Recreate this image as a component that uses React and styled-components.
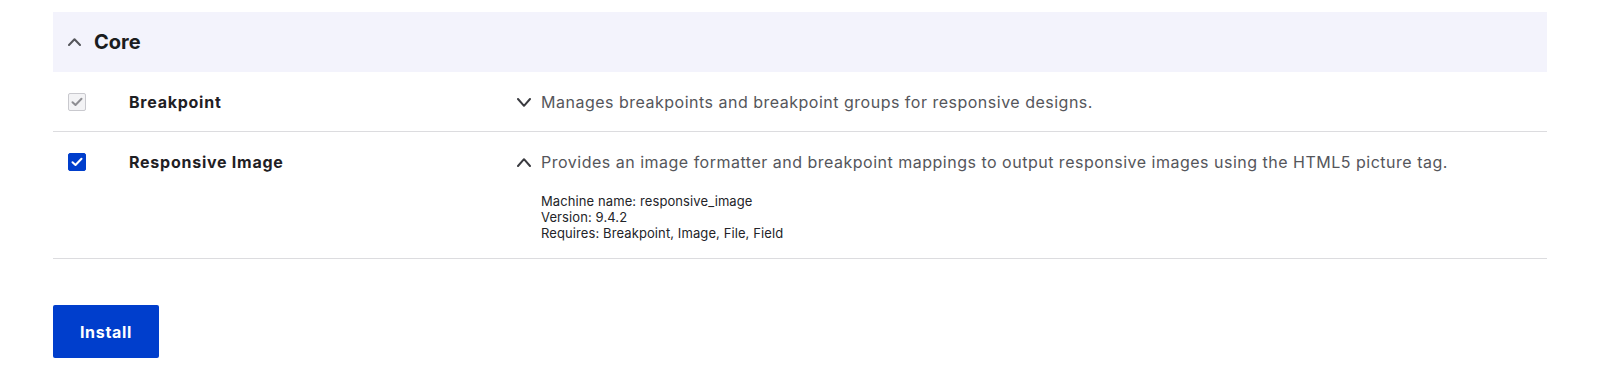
import React from "react";
import styled, { createGlobalStyle } from "styled-components";

const GlobalStyle = createGlobalStyle`
  html, body { margin: 0; padding: 0; background: #ffffff; }
  body {
    font-family: Inter, "Noto Sans", "Liberation Sans", sans-serif;
    color: #232429;
    -webkit-font-smoothing: antialiased;
  }
`;

const Page = styled.div`
  padding: 12px 53px 0 53px;
`;

const Section = styled.section`
  display: flex;
  flex-direction: column;
`;

const SectionHeader = styled.div`
  height: 60px;
  background: #f3f3fc;
  display: flex;
  align-items: center;
  gap: 13px;
  padding-left: 15px;
  font-size: 20px;
  font-weight: 700;
  color: #1b1c20;
`;

const Row = styled.div`
  display: grid;
  grid-template-columns: 76px 388px 1fr;
  padding: ${(p) => (p.$open ? "20px 0 17px" : "20px 0 19px")};
  border-bottom: 1px solid #dcdcdf;
`;

const CheckCell = styled.div`
  padding-left: 15px;
  height: 20px;
  display: flex;
  align-items: center;
`;

const Box = styled.span`
  width: 18px;
  height: 18px;
  box-sizing: border-box;
  border-radius: 2px;
  display: flex;
  align-items: center;
  justify-content: center;
  background: ${(p) => (p.$disabled ? "#f3f3f5" : "#003ecc")};
  border: 1px solid ${(p) => (p.$disabled ? "#c9c9ce" : "#003ecc")};
`;

const Name = styled.div`
  font-size: 16px;
  line-height: 20px;
  font-weight: 700;
  letter-spacing: 0.75px;
  color: #1f2024;
`;

const DescCell = styled.div`
  display: flex;
  flex-direction: column;
`;

const DescLine = styled.div`
  display: flex;
  align-items: center;
  gap: 10px;
  font-size: 16px;
  line-height: 20px;
  letter-spacing: 0.5px;
  color: #55565b;
`;

const Details = styled.div`
  margin-top: 21px;
  padding-left: 24px;
  font-size: 13px;
  line-height: 16px;
  letter-spacing: 0.1px;
  color: #232429;
`;

const Button = styled.button`
  margin-top: 46px;
  width: 106px;
  height: 53px;
  border: 0;
  border-radius: 2px;
  background: #003ecc;
  color: #ffffff;
  font-family: inherit;
  font-size: 16px;
  font-weight: 700;
  letter-spacing: 0.7px;
  cursor: pointer;
`;

const Chevron = ({ up, w = 12, h = 8, color = "#4a4b50" }) => (
  <svg width={w} height={h} viewBox={`0 0 ${w} ${h}`} fill="none">
    <polyline
      points={
        up
          ? `1,${h - 1} ${w / 2},1.2 ${w - 1},${h - 1}`
          : `1,1 ${w / 2},${h - 1.2} ${w - 1},1`
      }
      stroke={color}
      strokeWidth="2"
      strokeLinecap="round"
      strokeLinejoin="round"
    />
  </svg>
);

const Check = ({ color }) => (
  <svg width="12" height="10" viewBox="0 0 12 10" fill="none">
    <polyline
      points="1.5,5.2 4.5,8 10.5,1.8"
      stroke={color}
      strokeWidth="2"
      strokeLinecap="round"
      strokeLinejoin="round"
    />
  </svg>
);

export default function App() {
  return (
    <Page>
      <GlobalStyle />
      <Section>
        <SectionHeader>
          <Chevron up w={13} h={8} color="#55565b" />
          Core
        </SectionHeader>
        <Row>
          <CheckCell>
            <Box $disabled>
              <Check color="#8e8e93" />
            </Box>
          </CheckCell>
          <Name>Breakpoint</Name>
          <DescCell>
            <DescLine>
              <Chevron w={14} h={9} color="#3a3b40" />
              Manages breakpoints and breakpoint groups for responsive designs.
            </DescLine>
          </DescCell>
        </Row>
        <Row $open>
          <CheckCell>
            <Box>
              <Check color="#ffffff" />
            </Box>
          </CheckCell>
          <Name>Responsive Image</Name>
          <DescCell>
            <DescLine>
              <Chevron up w={14} h={9} color="#3a3b40" />
              Provides an image formatter and breakpoint mappings to output
              responsive images using the HTML5 picture tag.
            </DescLine>
            <Details>
              <div>Machine name: responsive_image</div>
              <div>Version: 9.4.2</div>
              <div>Requires: Breakpoint, Image, File, Field</div>
            </Details>
          </DescCell>
        </Row>
      </Section>
      <Button>Install</Button>
    </Page>
  );
}
